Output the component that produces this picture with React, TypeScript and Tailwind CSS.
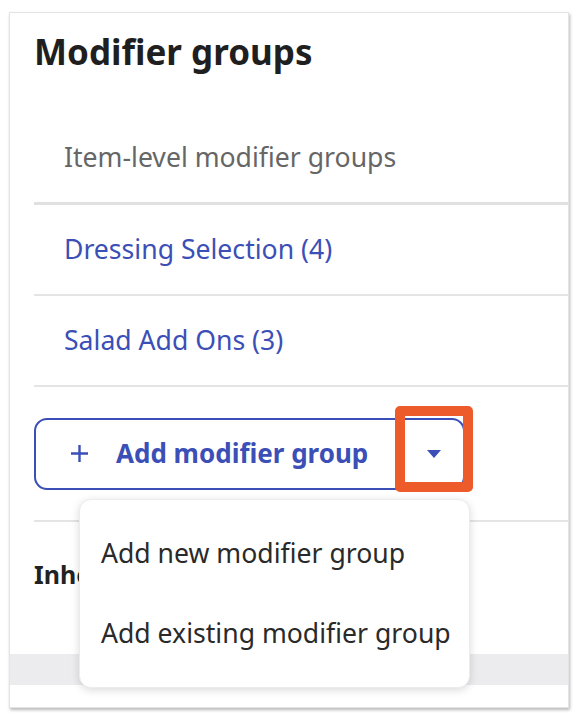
import React from "react";

export default function App() {
  return (
    <div className="relative w-[580px] h-[718px] bg-white" style={{ fontFamily: "'Noto Sans', 'Open Sans', sans-serif" }}>
      <div className="absolute left-[9px] top-[12px] w-[560px] h-[696px] bg-white border border-[#e4e4e4] shadow-[1px_2px_3px_rgba(0,0,0,0.28)] flex flex-col">
        <div className="h-[101px] pl-[24px] pt-[17px]">
          <h1 className="text-[35px] leading-[44px] font-bold text-[#1f1f1f]">Modifier groups</h1>
        </div>
        <div className="ml-[24px] flex flex-col">
          <div className="h-[91px] flex items-center pl-[30px] text-[26.6px] text-[#666] border-b-[3px] border-[#e0e0e0]">
            Item-level modifier groups
          </div>
          <div className="h-[91px] flex items-center pl-[30px] text-[26.6px] text-[#3b4fb6] border-b-2 border-[#e4e4e4]">
            Dressing Selection (4)
          </div>
          <div className="h-[91px] flex items-center pl-[30px] text-[26.6px] text-[#3b4fb6] border-b-2 border-[#e4e4e4]">
            Salad Add Ons (3)
          </div>
          <div className="h-[135px] flex items-center border-b-2 border-[#e4e4e4]">
            <div className="w-[431px] h-[72px] border-[2.5px] border-[#3b4fb6] rounded-[13px] flex items-center text-[#3b4fb6]">
              <svg className="ml-[35px] mr-[28px]" width="17" height="17" viewBox="0 0 17 17">
                <path d="M8.5 0v17M0 8.5h17" stroke="#3b4fb6" strokeWidth="2.4" fill="none" />
              </svg>
              <span className="text-[26px] font-bold">Add modifier group</span>
              <span className="ml-auto mr-[22px]">
                <svg width="14" height="8" viewBox="0 0 14 8"><path d="M0 0h14L7 8z" fill="#3b4fb6" /></svg>
              </span>
            </div>
          </div>
          <div className="h-[132px] pt-[35px] text-[25px] leading-[34px] font-bold text-[#222] whitespace-nowrap">
            Inherited modifier groups
          </div>
        </div>
        <div className="h-[31px] bg-[#ececee]" />
        <div className="flex-1" />
      </div>

      <div className="absolute left-[395px] top-[406px] w-[78px] h-[86px] border-[10px] border-[#ee5b2b] rounded-[5px]" />

      <div className="absolute left-[79px] top-[499px] w-[391px] h-[189px] bg-white rounded-[12px] border border-[#ececec] shadow-[0_2px_8px_rgba(0,0,0,0.15)] flex flex-col pt-[14px]">
        <div className="h-[80px] flex items-center pl-[21px] text-[26.6px] text-[#2a2a2a]">Add new modifier group</div>
        <div className="h-[80px] flex items-center pl-[21px] text-[26.6px] text-[#2a2a2a]">Add existing modifier group</div>
      </div>
    </div>
  );
}
